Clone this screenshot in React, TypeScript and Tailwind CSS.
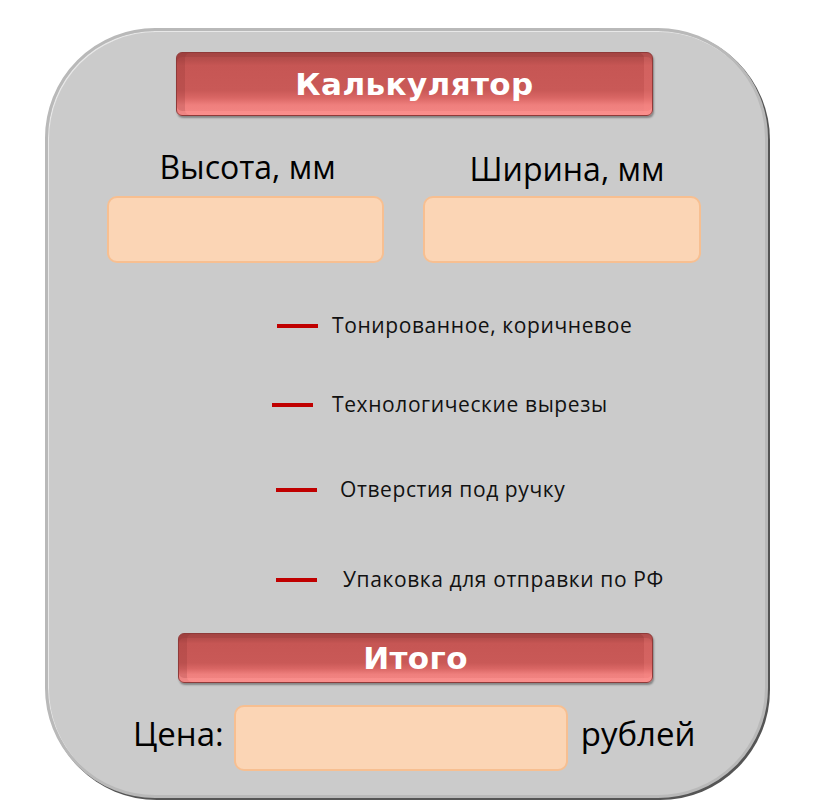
import React from "react";

function RedBar({ text }: { text: string }) {
  return (
    <div className="relative flex h-full w-full items-center justify-center overflow-hidden rounded-[6px] border border-[#8f3a39] bg-[linear-gradient(180deg,#ad4a48_0%,#b94f4d_12%,#c65654_20%,#c95957_60%,#d96664_72%,#ef7f7d_84%,#f48785_100%)] shadow-[inset_0_4px_0_rgba(140,50,50,0.25),inset_0_-4px_0_rgba(255,150,148,0.5),inset_8px_0_0_rgba(120,40,40,0.18),inset_-8px_0_0_rgba(255,140,138,0.22),1px_2px_2px_rgba(0,0,0,0.35)]">
      <span className="text-[31px] font-bold leading-none tracking-[0.4px] text-white [font-family:'DejaVu_Sans',Verdana,sans-serif]">
        {text}
      </span>
    </div>
  );
}

function Field({ className }: { className: string }) {
  return (
    <div
      className={
        "rounded-[10px] border-2 border-[#f7bf91] bg-[#fbd5b5] " + className
      }
    />
  );
}

function Item({ text, dashMl, gap }: { text: string; dashMl: string; gap: string }) {
  return (
    <div className={"flex items-center " + dashMl}>
      <div className="h-[4px] w-[41px] bg-[#c00000]" />
      <span
        className={
          "text-[21px] leading-none tracking-[0.6px] text-[#111] [font-family:'Open_Sans',sans-serif] " + gap
        }
      >
        {text}
      </span>
    </div>
  );
}

export default function App() {
  return (
    <div className="h-[800px] w-[826px] bg-white [font-family:'Open_Sans',sans-serif]">
      <div className="ml-[45px] pt-[28px]">
        <div className="flex h-[770px] w-[723px] flex-col rounded-[110px] border-[3px] border-[#b9b9b9] bg-[#cbcbcb] shadow-[2px_2px_0_#555,inset_1px_1px_0_#e8e8e8]">
          <div className="ml-[128px] mt-[21px] h-[64px] w-[477px]">
            <RedBar text="Калькулятор" />
          </div>
          <div className="mt-[35px] flex">
            <div className="ml-[59px] flex w-[277px] flex-col items-center">
              <span className="ml-[4px] text-[32px] leading-none text-black">Высота, мм</span>
              <Field className="mt-[13px] h-[67px] w-[277px]" />
            </div>
            <div className="ml-[39px] flex w-[278px] flex-col items-center">
              <span className="mt-[2px] ml-[10px] text-[32px] leading-none text-black">Ширина, мм</span>
              <Field className="mt-[11px] h-[67px] w-[278px]" />
            </div>
          </div>
          <div className="mt-[52px] flex flex-col">
            <Item text="Тонированное, коричневое" dashMl="ml-[229px]" gap="ml-[14px]" />
            <div className="mt-[58px]">
              <Item text="Технологические вырезы" dashMl="ml-[224px]" gap="ml-[19px]" />
            </div>
            <div className="mt-[64px]">
              <Item text="Отверстия под ручку" dashMl="ml-[228px]" gap="ml-[23px]" />
            </div>
            <div className="mt-[69px]">
              <Item text="Упаковка для отправки по РФ" dashMl="ml-[228px]" gap="ml-[26px]" />
            </div>
          </div>
          <div className="ml-[130px] mt-[43px] h-[50px] w-[475px]">
            <RedBar text="Итого" />
          </div>
          <div className="mt-[22px] flex items-center">
            <span className="mb-[10px] ml-[85px] text-[33px] leading-none text-black">Цена:</span>
            <Field className="ml-[10px] h-[66px] w-[334px]" />
            <span className="mb-[10px] ml-[13px] text-[33px] leading-none text-black">рублей</span>
          </div>
        </div>
      </div>
    </div>
  );
}
